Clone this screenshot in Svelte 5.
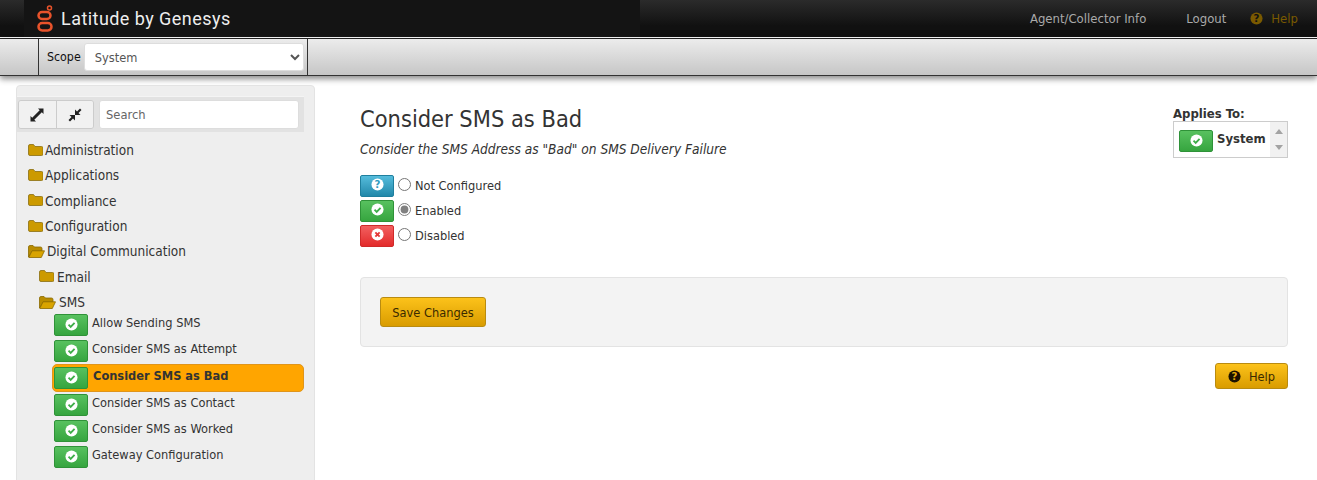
<script>
  const topFolders = ['Administration', 'Applications', 'Compliance', 'Configuration'];
  const smsItems = [
    { label: 'Allow Sending SMS' },
    { label: 'Consider SMS as Attempt' },
    { label: 'Consider SMS as Bad', active: true },
    { label: 'Consider SMS as Contact' },
    { label: 'Consider SMS as Worked' },
    { label: 'Gateway Configuration' }
  ];
  const folderClosed = 'M.5 3a1.500 1.500 0 0 1 1.500-1.500h3.500l1.500 2h6.500a1.500 1.500 0 0 1 1.500 1.500v6a1.500 1.500 0 0 1-1.500 1.500H2A1.500 1.500 0 0 1 .5 11z';
</script>

{#snippet check()}
  <svg class="glyph" viewBox="0 0 14 14"><circle cx="7" cy="7" r="6.500" fill="#fff"/><path d="M3.800 7.200l2.300 2.300 4.200-4.300" fill="none" stroke="#3fae49" stroke-width="2"/></svg>
{/snippet}

{#snippet folder(open)}
  {#if open}
    <svg class="folder open" viewBox="0 0 17 15">
      <path d="M.5 13V3a1.500 1.500 0 0 1 1.500-1.500h3l1.500 1.500h6a1.500 1.500 0 0 1 1.500 1.500V7H4.500z" fill="#b98c00" stroke="#8a6a00" stroke-width=".8"/>
      <path d="M4 6.800h12.500l-3.200 6.700H.8z" fill="#d9a400" stroke="#8a6a00" stroke-width=".8"/>
    </svg>
  {:else}
    <svg class="folder" viewBox="0 0 15 15"><path d={folderClosed} fill="#cc9a00" stroke="#8a6f10" stroke-width=".8"/></svg>
  {/if}
{/snippet}

<header class="topbar">
  <div class="brand">
    <svg class="logo" viewBox="0 0 16 27">
      <circle cx="12.500" cy="3" r="2" fill="none" stroke="#e8532b" stroke-width="1.500"/>
      <rect x="1.500" y="7" width="12" height="7" rx="3.500" fill="none" stroke="#e8532b" stroke-width="2.500"/>
      <rect x="1.500" y="18" width="13" height="7.500" rx="3.700" fill="none" stroke="#e8532b" stroke-width="2.500"/>
    </svg>
    <span class="brand-name">Latitude by Genesys</span>
  </div>
  <nav class="topnav">
    <span>Agent/Collector Info</span>
    <span>Logout</span>
    <span class="tophelp">
      <svg class="q" viewBox="0 0 14 14"><circle cx="7" cy="7" r="6.500" fill="currentColor"/><text x="7" y="10.500" text-anchor="middle" class="qmark">?</text></svg>
      Help
    </span>
  </nav>
</header>

<div class="toolbar">
  <div class="scope">
    <label for="scope">Scope</label>
    <select id="scope"><option>System</option></select>
  </div>
</div>

<div class="page">
  <aside class="tree">
    <div class="tree-tools">
      <div class="btn-group">
        <button aria-label="Expand">
          <svg viewBox="0 0 14 14"><path d="M8 .5h5.500V6l-1.700-1.700-7.500 7.500L6 13.500H.5V8l1.700 1.700 7.500-7.500z" fill="#222"/></svg>
        </button>
        <button aria-label="Collapse">
          <svg viewBox="0 0 14 14"><path d="M7 7V1.500l2 2 3-3L13.500 2l-3 3 2 2zM7 7v5.500l-2-2-3 3L.5 12l3-3-2-2z" fill="#222"/></svg>
        </button>
      </div>
      <input class="search" placeholder="Search" />
    </div>

    <ul class="nodes">
      {#each topFolders as name}
        <li class="node">{@render folder(false)}{name}</li>
      {/each}
      <li class="node">{@render folder(true)}Digital Communication</li>
      <li class="node sub">{@render folder(false)}Email</li>
      <li class="node sub">{@render folder(true)}SMS</li>
    </ul>
    <ul class="leaves">
      {#each smsItems as item}
        <li class="leaf" class:active={item.active}>
          <span class="badge green">{@render check()}</span>
          <span class="leaf-label">{item.label}</span>
        </li>
      {/each}
    </ul>
  </aside>

  <main class="content">
    <div class="head">
      <div>
        <h1>Consider SMS as Bad</h1>
        <p class="desc">Consider the SMS Address as "Bad" on SMS Delivery Failure</p>
      </div>
      <div class="applies">
        <strong>Applies To:</strong>
        <div class="applies-box">
          <span class="badge green">{@render check()}</span>
          <b>System</b>
          <div class="scroll"><i class="up"></i><i class="down"></i></div>
        </div>
      </div>
    </div>

    <div class="options">
      <label class="option">
        <span class="badge blue"><svg class="glyph" viewBox="0 0 14 14"><circle cx="7" cy="7" r="6.500" fill="#fff"/><text x="7" y="10.800" text-anchor="middle" class="qmark blue-q">?</text></svg></span>
        <input type="radio" name="state" />
        Not Configured
      </label>
      <label class="option">
        <span class="badge green">{@render check()}</span>
        <input type="radio" name="state" checked />
        Enabled
      </label>
      <label class="option">
        <span class="badge red"><svg class="glyph" viewBox="0 0 14 14"><circle cx="7" cy="7" r="6.500" fill="#fff"/><path d="M4.700 4.700l4.600 4.600M9.300 4.700l-4.600 4.600" stroke="#e53a3a" stroke-width="2"/></svg></span>
        <input type="radio" name="state" />
        Disabled
      </label>
    </div>

    <div class="well">
      <button class="gold save">Save Changes</button>
    </div>

    <div class="help-row">
      <button class="gold help">
        <svg class="q" viewBox="0 0 14 14"><circle cx="7" cy="7" r="6.500" fill="#1c1200"/><text x="7" y="10.500" text-anchor="middle" class="qmark gold-q">?</text></svg>
        Help
      </button>
    </div>
  </main>
</div>

<style>
  :global(body) {
    margin: 0;
    background: #fff;
    font-family: "DejaVu Sans Condensed", "DejaVu Sans", sans-serif;
    color: #333;
    overflow: hidden;
  }

  .topbar {
    height: 37px;
    display: flex;
    justify-content: space-between;
    background: linear-gradient(#2b2b2b, #111 70%);
    color: #fff;
  }
  .brand {
    width: 640px;
    padding-left: 37px;
    display: flex;
    align-items: center;
    gap: 8px;
    box-sizing: border-box;
    background: linear-gradient(90deg, transparent 24px, #141414 24px);
  }
  .logo { width: 16px; height: 27px; }
  .brand-name {
    font: 18px Roboto, sans-serif;
    letter-spacing: .45px;
    color: #eee;
  }
  .topnav {
    display: flex;
    align-items: center;
    gap: 40px;
    padding-right: 19px;
    font: 13px "DejaVu Sans Condensed", sans-serif;
    color: #aaa;
  }
  .tophelp { color: #7a5a00; display: flex; align-items: center; gap: 8px; margin-left: -16px; }
  .q { width: 13px; height: 13px; }
  .qmark { font: bold 11px "DejaVu Sans", sans-serif; fill: #111; }
  .blue-q { fill: #2f9cc0; }
  .gold-q { fill: #e5a80c; }

  .toolbar {
    margin-top: 1px;
    height: 36px;
    border-top: 1px solid #222;
    border-bottom: 1px solid #333;
    background: linear-gradient(#ececec, #c6c6c6);
    box-shadow: 0 3px 6px rgba(0, 0, 0, .45);
    padding-left: 38px;
  }
  .scope {
    width: 270px;
    height: 100%;
    display: flex;
    align-items: center;
    gap: 3px;
    padding-left: 8px;
    box-sizing: border-box;
    border-left: 1px solid #333;
    border-right: 1px solid #333;
    font: 12.300px "DejaVu Sans Condensed", sans-serif;
    color: #111;
  }
  select {
    width: 220px;
    height: 28px;
    border: 1px solid #ddd;
    border-radius: 3px;
    background: #fff;
    padding-left: 6px;
    font: 12.700px "DejaVu Sans Condensed", sans-serif;
    color: #555;
  }

  .page {
    display: flex;
    padding: 9px 29px 0 16px;
    gap: 45px;
  }

  .tree {
    width: 299px;
    flex: none;
    height: 400px;
    background: #eee;
    border: 1px solid #e3e3e3;
    border-radius: 4px;
    box-sizing: border-box;
    padding-top: 10px;
  }
  .tree-tools {
    display: flex;
    gap: 5px;
    height: 29px;
    background: #e2e2e2;
    border-top: 1px solid #f4f4f4;
    margin-right: 10px;
    padding: 3px 5px 3px 1px;
    align-items: stretch;
  }
  .btn-group {
    display: flex;
    width: 76px;
    border: 1px solid #ccc;
    border-radius: 3px;
    overflow: hidden;
    box-sizing: border-box;
  }
  .btn-group button {
    flex: 1;
    border: 0;
    background: #f1f1f1;
    padding: 0;
    display: flex;
    align-items: center;
    justify-content: center;
  }
  .btn-group button + button { border-left: 1px solid #ccc; }
  .btn-group svg { width: 14px; height: 14px; }
  .search {
    flex: 1;
    min-width: 0;
    border: 1px solid #ddd;
    border-radius: 3px;
    padding: 0 6px;
    font: 12.800px "DejaVu Sans Condensed", sans-serif;
  }
  .search::placeholder { color: #666; }

  ul { list-style: none; margin: 0; padding: 0; }
  .nodes { padding: 5.400px 0 0 11px; }
  .node {
    height: 25.330px;
    display: flex;
    align-items: center;
    gap: 2px;
    font: 13.500px "DejaVu Sans Condensed", sans-serif;
    color: #333;
  }
  .node.sub { padding-left: 11px; gap: 3px; }
  .folder { width: 15px; height: 15px; }
  .folder.open { width: 17px; }

  .leaves { padding: 0 10px 0 37px; margin-top: -2.600px; }
  .leaf {
    height: 26px;
    display: flex;
    align-items: center;
    gap: 4px;
    font: 12.700px "DejaVu Sans Condensed", sans-serif;
    color: #333;
    box-sizing: border-box;
  }
  .leaf-label { position: relative; top: -3px; }
  .leaf.active {
    height: 28px;
    margin: 0 0 0 -2px;
    padding-left: 1px;
    gap: 5px;
    background: #ffa500;
    border: 1px solid #e0951a;
    border-radius: 5px;
    font-weight: 700;
  }

  .badge {
    width: 34px;
    height: 22px;
    flex: none;
    display: inline-flex;
    align-items: center;
    justify-content: center;
    border-radius: 2px;
    box-sizing: border-box;
    padding-bottom: 2px;
  }
  .green { background: linear-gradient(#58c15f, #36a53f); border: 1px solid #2f9238; }
  .blue { background: linear-gradient(#55bcdc, #2288aa); border: 1px solid #1f7f9e; }
  .red { background: linear-gradient(#f26060, #e32b2b); border: 1px solid #cf2a2a; }
  .glyph { width: 13px; height: 13px; }

  .content { flex: 1; min-width: 0; }
  .head {
    display: flex;
    justify-content: space-between;
    align-items: flex-start;
    padding-top: 20px;
  }
  h1 {
    margin: 0;
    font: 400 23.400px "DejaVu Sans Condensed", sans-serif;
    color: #333;
  }
  .desc {
    margin: 8px 0 0;
    font: italic 13.600px "DejaVu Sans Condensed", sans-serif;
    color: #333;
  }
  .applies { font: 700 13px "DejaVu Sans Condensed", sans-serif; margin-top: -4px; padding-top: 5px; }
  .applies-box {
    width: 115px;
    height: 37px;
    box-sizing: border-box;
    border: 1px solid #ccc;
    display: flex;
    align-items: center;
    gap: 4px;
    padding: 3px 0 0 5px;
    position: relative;
  }
  .applies-box b { margin-bottom: 5px; }
  .scroll {
    position: absolute;
    top: 0;
    right: 0;
    bottom: 0;
    width: 17px;
    background: #f1f1f1;
    display: flex;
    flex-direction: column;
    justify-content: space-between;
    align-items: center;
    padding: 7px 0;
    box-sizing: border-box;
  }
  .up, .down { width: 0; height: 0; border: 4px solid transparent; }
  .up { border-bottom: 5px solid #a3a3a3; border-top: 0; }
  .down { border-top: 5px solid #a3a3a3; border-bottom: 0; }

  .options { margin-top: 15px; }
  .option {
    height: 25px;
    display: flex;
    align-items: center;
    font: 12.700px "DejaVu Sans Condensed", sans-serif;
    color: #333;
  }
  .option input { margin: 0 4px 3px 4px; width: 13px; height: 13px; accent-color: #808080; }

  .well {
    margin-top: 29px;
    height: 70px;
    background: #f3f3f3;
    border: 1px solid #e3e3e3;
    border-radius: 4px;
    padding: 19px;
    box-sizing: border-box;
  }
  .gold {
    height: 30px;
    background: linear-gradient(#fcc21a, #d99c00);
    border: 1px solid #b98b10;
    border-radius: 3px;
    font: 12.700px "DejaVu Sans Condensed", sans-serif;
    color: #3a2a00;
    padding: 0 11px;
  }
  .save { width: 106px; }
  .help-row { display: flex; justify-content: flex-end; margin-top: 16px; }
  .help {
    width: 73px;
    height: 26px;
    display: flex;
    align-items: center;
    justify-content: center;
    gap: 8px;
  }
</style>
